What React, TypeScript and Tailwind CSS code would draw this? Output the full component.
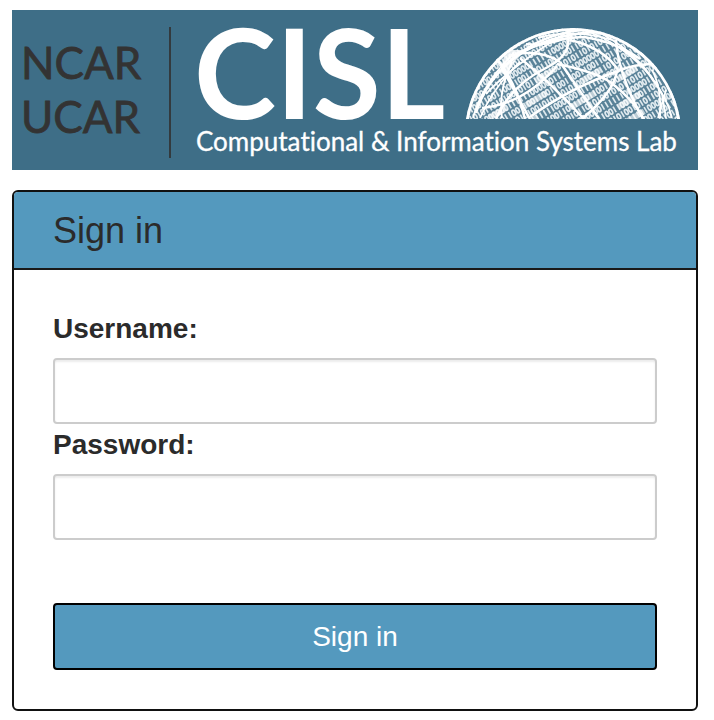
import React from "react";

const ROWS = Array.from({ length: 28 }, (_, row) =>
  Array.from({ length: 62 }, (_, col) => (row * 7 + col * 5 + ((row * col) % 3)) % 4 < 2),
);

const STRONG = [
  "M491 60 L518 109",
  "M484 48 Q504 72 513 109",
  "M508 48 Q540 74 572 109",
  "M548 52 Q566 78 587 109",
  "M518 107 Q558 78 606 61 Q622 54 642 54",
  "M545 54 Q584 62 598 72 Q620 88 632 109",
  "M605 61 Q602 82 570 109",
  "M604 30 Q606 64 631 109",
  "M555 22 Q562 44 534 58 Q498 76 484 109",
  "M558 30 Q592 38 606 60",
  "M470 98 Q512 94 545 56",
  "M490 58 Q526 24 586 22",
  "M500 46 Q536 28 572 27 Q604 32 628 49",
  "M464 103 Q476 62 522 34 Q546 22 570 20",
  "M504 44 Q530 40 548 52",
];

const FINE = [
  "M461 108 Q470 74 502 43",
  "M468 108 Q482 76 508 52",
  "M490 108 Q486 80 500 52",
  "M474 84 Q500 56 552 24",
  "M514 34 Q540 36 560 26",
  "M526 28 Q560 18 600 30",
  "M572 20 Q612 34 640 68 Q656 90 660 108",
  "M590 24 Q628 44 650 84 L654 108",
  "M608 38 Q630 50 642 72",
  "M640 60 Q650 78 648 108",
  "M654 80 L646 108",
];

function Globe() {
  return (
    <g>
      <defs>
        <clipPath id="dome">
          <path d="M454 109 A108.4 108.4 0 0 1 668 109 Z" />
        </clipPath>
      </defs>
      <g clipPath="url(#dome)">
        <rect x="454" y="18" width="214" height="91" fill="#ffffff" fillOpacity="0.14" />
        <g transform="rotate(-31 561 109)" fill="none" stroke="#dfe9ee" strokeWidth="1.7">
          {ROWS.map((bits, row) =>
            bits.map((one, col) => {
              const x = 430 + col * 4.4;
              const y = -4 + row * 8.2;
              return one ? (
                <path key={`${row}-${col}`} d={`M${x} ${y} v6.4`} />
              ) : (
                <ellipse key={`${row}-${col}`} cx={x} cy={y + 3.2} rx="1.5" ry="2.7" />
              );
            }),
          )}
        </g>
        <g transform="rotate(-31 561 109)" fill="#ffffff" fillOpacity="0.6">
          <rect x="490" y="62" width="20" height="6" />
          <rect x="528" y="70" width="24" height="6" />
          <rect x="506" y="86" width="26" height="6" />
          <rect x="566" y="95" width="28" height="6" />
          <rect x="548" y="54" width="22" height="6" />
          <rect x="588" y="78" width="22" height="6" />
          <rect x="606" y="119" width="26" height="6" />
          <rect x="546" y="111" width="26" height="6" />
          <rect x="620" y="95" width="22" height="6" />
          <rect x="600" y="136" width="26" height="6" />
        </g>
        <g fill="none" stroke="#ffffff" strokeWidth="2.5">
          {STRONG.map((d) => (
            <path key={d} d={d} />
          ))}
        </g>
        <g fill="none" stroke="#ffffff" strokeWidth="1.8">
          {FINE.map((d) => (
            <path key={d} d={d} />
          ))}
        </g>
        <path d="M488 62 L492 46 L500 40 L514 40 L504 50 L494 66 Z" fill="#ffffff" fillOpacity="0.85" />
        <path d="M454 109 A108.4 108.4 0 0 1 668 109" fill="none" stroke="#ffffff" strokeWidth="6" />
      </g>
    </g>
  );
}

function Banner() {
  return (
    <svg
      viewBox="0 0 686 160"
      role="img"
      aria-label="NCAR UCAR CISL Computational & Information Systems Lab"
      className="block h-auto w-full overflow-visible bg-[#3e6e87] font-['Lato','Open_Sans',sans-serif]"
    >
      <g fill="#333333" stroke="#333333" strokeWidth="0.8" fontSize="44">
        <text x="9" y="69">NCAR</text>
        <text x="9" y="123">UCAR</text>
      </g>
      <rect x="157" y="17" width="2" height="131" fill="#333a3e" />
      <text x="182" y="109" fill="#ffffff" fontSize="124" className="font-bold">CISL</text>
      <text
        x="184"
        y="141"
        fill="#ffffff"
        stroke="#ffffff"
        strokeWidth="0.3"
        fontSize="26"
        className="[font-variant-ligatures:none]"
      >
        Computational &amp; Information Systems Lab
      </text>
      <Globe />
    </svg>
  );
}

function Field({ id, label, type }: { id: string; label: string; type: string }) {
  return (
    <div>
      <label htmlFor={id} className="mb-2 block text-[28px] leading-[42px] font-bold">
        {label}
      </label>
      <input
        id={id}
        name={id}
        type={type}
        className="block h-[66px] w-full rounded border-2 border-[#cccccc] bg-white px-4 text-[28px] shadow-[inset_0_2px_2px_rgba(0,0,0,0.075)]"
      />
    </div>
  );
}

export default function App() {
  return (
    <main className="bg-white px-3 pt-[10px] pr-4 pb-[9px] font-['Liberation_Sans',Arial,sans-serif] text-[#2b2b2b]">
      <Banner />
      <section className="mt-5 overflow-hidden rounded-md border-2 border-[#111111] bg-white">
        <h1 className="border-b-2 border-[#1a1a1a] bg-[#5499be] px-[39px] pt-[18px] pb-4 text-4xl leading-[42px]">
          Sign in
        </h1>
        <form className="px-[39px] pt-[38px] pb-[39px]" onSubmit={(e) => e.preventDefault()}>
          <Field id="username" label="Username:" type="text" />
          <Field id="password" label="Password:" type="password" />
          <button
            type="submit"
            className="mt-[63px] block h-[67px] w-full rounded border-2 border-black bg-[#5499be] text-[28px] leading-[40px] text-white"
          >
            Sign in
          </button>
        </form>
      </section>
    </main>
  );
}
